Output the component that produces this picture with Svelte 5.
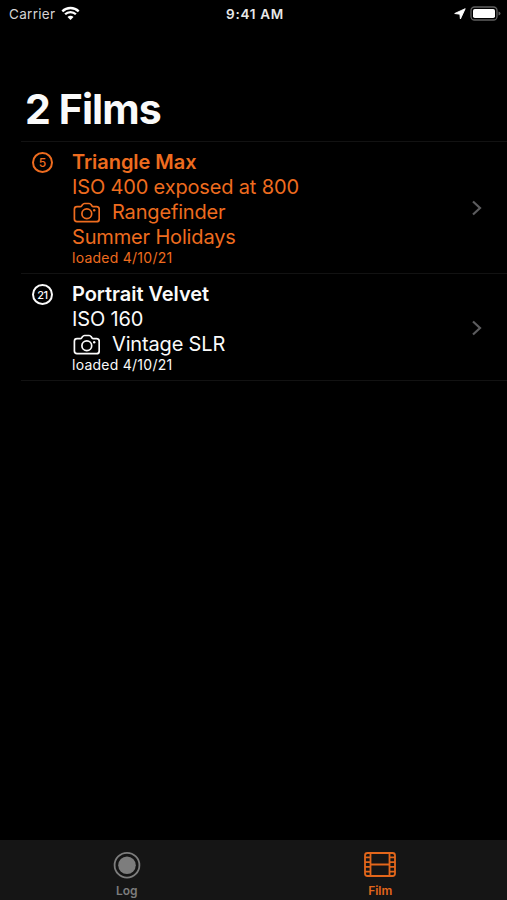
<script lang="ts">
  interface Film {
    frame: number;
    name: string;
    iso: string;
    camera: string;
    note?: string;
    loaded: string;
    active?: boolean;
  }

  const films: Film[] = [
    {
      frame: 5,
      name: "Triangle Max",
      iso: "ISO 400 exposed at 800",
      camera: "Rangefinder",
      note: "Summer Holidays",
      loaded: "4/10/21",
      active: true,
    },
    {
      frame: 21,
      name: "Portrait Velvet",
      iso: "ISO 160",
      camera: "Vintage SLR",
      loaded: "4/10/21",
    },
  ];

  let tab = $state("film");
</script>

<div class="screen">
  <header class="status">
    <div class="carrier">
      <span>Carrier</span>
      <svg width="19" height="15" viewBox="0 0 19 15" aria-hidden="true">
        <path d="M1.3 5.4a11.6 11.6 0 0 1 16.4 0" />
        <path d="M4.1 8.3a7.6 7.6 0 0 1 10.8 0" />
        <path class="solid" d="M6.5 11a4.2 4.2 0 0 1 6 0l-3 3z" />
      </svg>
    </div>
    <span class="time">9:41 AM</span>
    <div class="indicators">
      <svg width="12" height="12" viewBox="0 0 12 12" aria-hidden="true">
        <path class="arrow" d="M11.2.7.7 5.5l5.2.7.5 4.8z" />
      </svg>
      <svg width="31" height="15" viewBox="0 0 31 15" aria-hidden="true">
        <rect class="shell" x="1" y="1" width="26" height="13" rx="3.5" />
        <rect class="solid" x="3" y="3" width="22" height="9" rx="1.8" />
        <path class="cap" d="M28.5 5.5q2 .5 2 2t-2 2z" />
      </svg>
    </div>
  </header>

  <h1>{films.length} Films</h1>

  <ul class="films">
    {#each films as film}
      <li class="film" class:active={film.active}>
        <span class="badge" class:narrow={film.frame > 9}>{film.frame}</span>
        <div class="details">
          <span class="name">{film.name}</span>
          <span class="iso">{film.iso}</span>
          <span class="camera">
            <svg width="28" height="22" viewBox="0 0 28 22" aria-hidden="true">
              <path
                d="M5 4.7h3.2c.7 0 1.1-.2 1.5-.8l.9-1.3c.5-.8 1-1.1 1.9-1.1h4.7c.9 0 1.4.3 1.9 1.1l.9 1.3c.4.6.8.8 1.5.8h3.1c1.6 0 2.6.9 2.6 2.6v9.8c0 1.7-.9 2.6-2.6 2.6H5c-1.7 0-2.6-.9-2.6-2.6V7.3c0-1.7.9-2.6 2.6-2.6z"
              />
              <circle cx="14.8" cy="11.8" r="4.9" />
              <circle class="flash" cx="22.2" cy="8.3" r="1.2" />
            </svg>
            <span>{film.camera}</span>
          </span>
          {#if film.note}
            <span class="note">{film.note}</span>
          {/if}
          <small>loaded {film.loaded}</small>
        </div>
        <svg class="chevron" width="12" height="18" viewBox="0 0 12 18" aria-hidden="true">
          <path d="M2 2.5 9 9l-7 6.5" />
        </svg>
      </li>
    {/each}
  </ul>

  <nav class="tabs">
    <button class:selected={tab === "log"} onclick={() => (tab = "log")}>
      <svg width="34" height="28" viewBox="0 0 34 28" aria-hidden="true">
        <circle cx="17" cy="14.2" r="12.4" />
        <circle class="dot" cx="17" cy="14.2" r="8.8" />
      </svg>
      Log
    </button>
    <button class:selected={tab === "film"} onclick={() => (tab = "film")}>
      <svg width="34" height="28" viewBox="0 0 34 28" aria-hidden="true">
        <rect x="2" y="2" width="30" height="23" rx="2.5" />
        <path d="M7.5 2v23M26.5 2v23M7.5 13.5h19" />
        <path
          d="M2 6.4h5.5M2 11.1h5.5M2 15.9h5.5M2 20.6h5.5M26.5 6.4H32M26.5 11.1H32M26.5 15.9H32M26.5 20.6H32"
        />
      </svg>
      Film
    </button>
  </nav>
</div>

<style>
  :global(body) {
    background: #000;
  }

  .screen {
    display: flex;
    flex-direction: column;
    height: 100vh;
    overflow: hidden;
    background: #000;
    color: #fafafa;
    font-family: Inter, "Liberation Sans", sans-serif;
  }

  .solid {
    fill: #fff;
    stroke: none;
  }

  .arrow {
    fill: #fff;
    stroke: #fff;
    stroke-width: 0.9;
    stroke-linejoin: round;
  }

  .status {
    display: grid;
    grid-template-columns: 1fr auto 1fr;
    align-items: center;
    height: 27px;
    padding: 0 6px 0 9px;
    font-size: 13.5px;
  }

  .carrier {
    display: flex;
    align-items: center;
    gap: 6px;
    color: #d4d4d4;
    letter-spacing: 0.3px;
  }

  .carrier svg {
    fill: none;
    stroke: #fff;
    stroke-width: 2.3;
  }

  .time {
    color: #e8e8e8;
    font-size: 13.5px;
    font-weight: 600;
    letter-spacing: 0.7px;
  }

  .indicators {
    display: flex;
    align-items: center;
    justify-content: flex-end;
    gap: 4px;
  }

  .shell {
    fill: none;
    stroke: #606060;
    stroke-width: 1.3;
  }

  .cap {
    fill: #606060;
  }

  h1 {
    margin: 57px 0 0 25px;
    font-size: 41px;
    font-weight: 700;
    line-height: 50px;
    letter-spacing: -0.9px;
  }

  .films {
    flex: 1;
    margin: 7px 0 0 21px;
    padding: 0;
    list-style: none;
    border-top: 1px solid #121212;
  }

  .film {
    display: flex;
    align-items: center;
    padding: 8px 24px 7px 11px;
    border-bottom: 1px solid #121212;
  }

  .active {
    color: #ee6c1f;
  }

  .badge {
    display: flex;
    align-items: center;
    justify-content: center;
    align-self: flex-start;
    box-sizing: border-box;
    width: 21px;
    height: 21px;
    margin: 2px 19px 0 0;
    border: 2px solid currentColor;
    border-radius: 50%;
    font-size: 12px;
    font-weight: 500;
  }

  .narrow {
    font-size: 11px;
    letter-spacing: -0.4px;
  }

  .details {
    display: flex;
    flex: 1;
    flex-direction: column;
    font-size: 20px;
    line-height: 25px;
    letter-spacing: -0.16px;
  }

  .name {
    font-weight: 600;
    letter-spacing: -0.05px;
  }

  .camera {
    display: flex;
    align-items: center;
    gap: 12px;
  }

  .camera svg {
    fill: none;
    stroke: currentColor;
    stroke-width: 1.7;
  }

  .camera .flash {
    fill: currentColor;
    stroke: none;
  }

  small {
    font-size: 14px;
    line-height: 16px;
    letter-spacing: 0.25px;
  }

  .chevron {
    fill: none;
    stroke: #5c5c5e;
    stroke-width: 2.2;
  }

  .tabs {
    display: grid;
    grid-template-columns: 1fr 1fr;
    height: 60px;
    background: #151515;
  }

  button {
    display: flex;
    flex-direction: column;
    align-items: center;
    padding: 11px 0 0;
    border: 0;
    background: none;
    color: #7d7d7d;
    font: 600 12px/14px Inter, "Liberation Sans", sans-serif;
    gap: 5px;
    cursor: pointer;
  }

  .selected {
    color: #e2661b;
  }

  .tabs svg {
    fill: none;
    stroke: currentColor;
    stroke-width: 1.8;
  }

  .tabs .dot {
    fill: currentColor;
    stroke: none;
  }
</style>
